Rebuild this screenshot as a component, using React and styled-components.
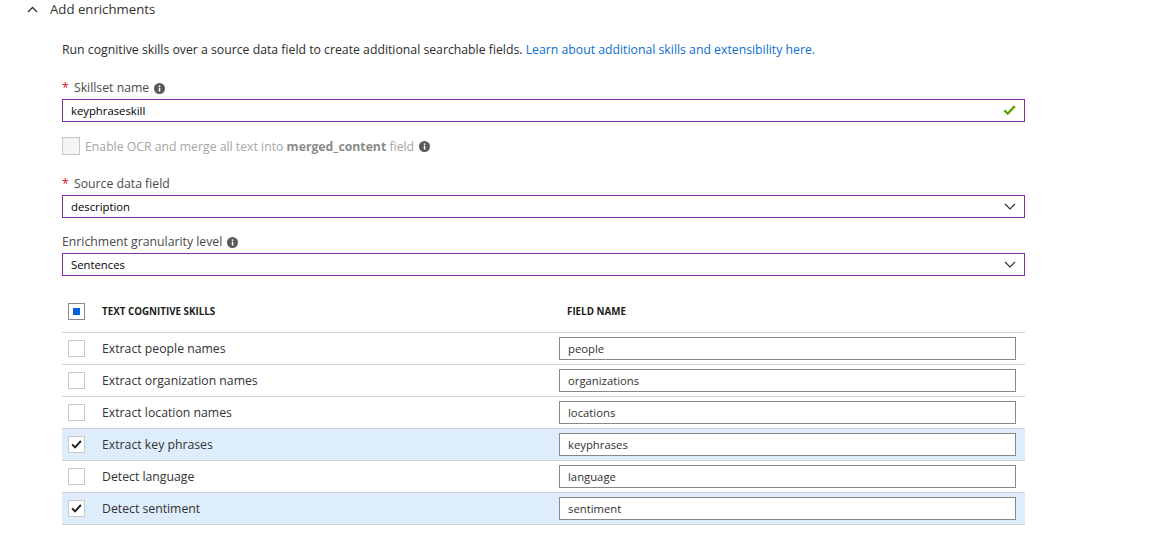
import React from "react";
import styled, { createGlobalStyle } from "styled-components";

const GlobalStyle = createGlobalStyle`
  html, body {
    margin: 0;
    padding: 0;
    background: #fff;
  }
  body {
    font-family: "Open Sans", "Segoe UI", sans-serif;
    font-size: 12.25px;
    color: #323130;
  }
`;

const Page = styled.div`
  width: 1160px;
  height: 558px;
  overflow: hidden;
`;

const SectionHeader = styled.div`
  display: flex;
  align-items: center;
  height: 18px;
  padding-left: 27px;
  gap: 12px;
  font-size: 13.2px;
  color: #323130;
`;

const Body = styled.div`
  display: flex;
  flex-direction: column;
  padding-left: 62px;
  width: 963px;
`;

const Description = styled.div`
  margin-top: 22px;
  line-height: 20px;
  color: #2b2b2b;
  a {
    color: #0a6ed1;
    text-decoration: none;
  }
`;

const Label = styled.div`
  display: flex;
  align-items: center;
  gap: 5px;
  margin-top: ${(p) => p.$gap}px;
  line-height: 20px;
  color: #4a4a4a;
`;

const Star = styled.span`
  color: #e00b1c;
  margin-right: 2px;
`;

const Field = styled.div`
  display: flex;
  align-items: center;
  justify-content: space-between;
  box-sizing: border-box;
  height: 23px;
  margin-top: 1px;
  padding: 0 8px;
  border: 1px solid #8a2da5;
  color: #000;
  font-size: 11.3px;
`;

const CheckRow = styled.div`
  display: flex;
  align-items: center;
  gap: 5px;
  height: 20px;
  margin-top: 14px;
  color: #a6a6a6;
  b {
    color: #8a8a8a;
  }
`;

const Box = styled.span`
  box-sizing: border-box;
  width: ${(p) => p.$size}px;
  height: ${(p) => p.$size}px;
  flex: none;
  display: inline-flex;
  align-items: center;
  justify-content: center;
  border: 1px solid ${(p) => p.$border};
  background: ${(p) => p.$bg || "#fff"};
`;

const Table = styled.div`
  margin-top: 14px;
`;

const Row = styled.div`
  display: grid;
  grid-template-columns: 40px 457px 457px;
  align-items: center;
  height: ${(p) => (p.$head ? 42 : 31)}px;
  padding-right: 9px;
  border-bottom: 1px solid #d0d0d0;
  background: ${(p) => (p.$selected ? "#deedfb" : "#fff")};
`;

const BoxCell = styled.div`
  display: flex;
  padding-left: 6px;
`;

const HeadText = styled.div`
  font-size: 9.8px;
  font-weight: 700;
  color: #1b1b1b;
  padding-left: ${(p) => p.$pad || 0}px;
`;

const NameCell = styled.div`
  color: #333;
`;

const NameInput = styled.div`
  box-sizing: border-box;
  height: 23px;
  display: flex;
  align-items: center;
  padding: 0 8px;
  border: 1px solid #8a8886;
  background: #fff;
  font-size: 11.3px;
  color: #323130;
`;

const Info = () => (
  <svg width="11" height="11" viewBox="0 0 11 11">
    <circle cx="5.5" cy="5.5" r="5.5" fill="#595959" />
    <rect x="4.8" y="4.6" width="1.5" height="4" fill="#fff" />
    <circle cx="5.55" cy="3.1" r="0.9" fill="#fff" />
  </svg>
);

const ChevronUp = () => (
  <svg width="11" height="7" viewBox="0 0 11 7">
    <path d="M1 6 L5.5 1.5 L10 6" fill="none" stroke="#333" strokeWidth="1.3" />
  </svg>
);

const ChevronDown = () => (
  <svg width="12" height="7" viewBox="0 0 12 7">
    <path d="M1 1 L6 6 L11 1" fill="none" stroke="#333" strokeWidth="1.2" />
  </svg>
);

const Tick = ({ color = "#222", w = 11 }) => (
  <svg width={w} height={w * 0.8} viewBox="0 0 11 9">
    <path d="M1 4.5 L4 7.5 L10 1" fill="none" stroke={color} strokeWidth="2" />
  </svg>
);

const skills = [
  { name: "Extract people names", field: "people", on: false },
  { name: "Extract organization names", field: "organizations", on: false },
  { name: "Extract location names", field: "locations", on: false },
  { name: "Extract key phrases", field: "keyphrases", on: true },
  { name: "Detect language", field: "language", on: false },
  { name: "Detect sentiment", field: "sentiment", on: true },
];

export default function App() {
  return (
    <Page>
      <GlobalStyle />
      <SectionHeader>
        <ChevronUp />
        <span>Add enrichments</span>
      </SectionHeader>
      <Body>
        <Description>
          Run cognitive skills over a source data field to create additional searchable fields.{" "}
          <a href="#">Learn about additional skills and extensibility here.</a>
        </Description>

        <Label $gap={18}>
          <span><Star>*</Star> Skillset name</span>
          <Info />
        </Label>
        <Field>
          <span>keyphraseskill</span>
          <Tick color="#57a300" w={13} />
        </Field>

        <CheckRow>
          <Box $size={18} $border="#c8c8c8" $bg="#f4f4f4" />
          <span>
            Enable OCR and merge all text into <b>merged_content</b> field
          </span>
          <Info />
        </CheckRow>

        <Label $gap={18}>
          <span><Star>*</Star> Source data field</span>
        </Label>
        <Field>
          <span>description</span>
          <ChevronDown />
        </Field>

        <Label $gap={14}>
          <span>Enrichment granularity level</span>
          <Info />
        </Label>
        <Field>
          <span>Sentences</span>
          <ChevronDown />
        </Field>

        <Table>
          <Row $head>
            <BoxCell>
              <Box $size={17} $border="#8a8a8a">
                <span style={{ width: 7, height: 7, background: "#0063d8" }} />
              </Box>
            </BoxCell>
            <HeadText>TEXT COGNITIVE SKILLS</HeadText>
            <HeadText $pad={8}>FIELD NAME</HeadText>
          </Row>
          {skills.map((s) => (
            <Row key={s.name} $selected={s.on}>
              <BoxCell>
                <Box $size={17} $border="#c8c8c8">
                  {s.on && <Tick />}
                </Box>
              </BoxCell>
              <NameCell>{s.name}</NameCell>
              <NameInput>{s.field}</NameInput>
            </Row>
          ))}
        </Table>
      </Body>
    </Page>
  );
}
